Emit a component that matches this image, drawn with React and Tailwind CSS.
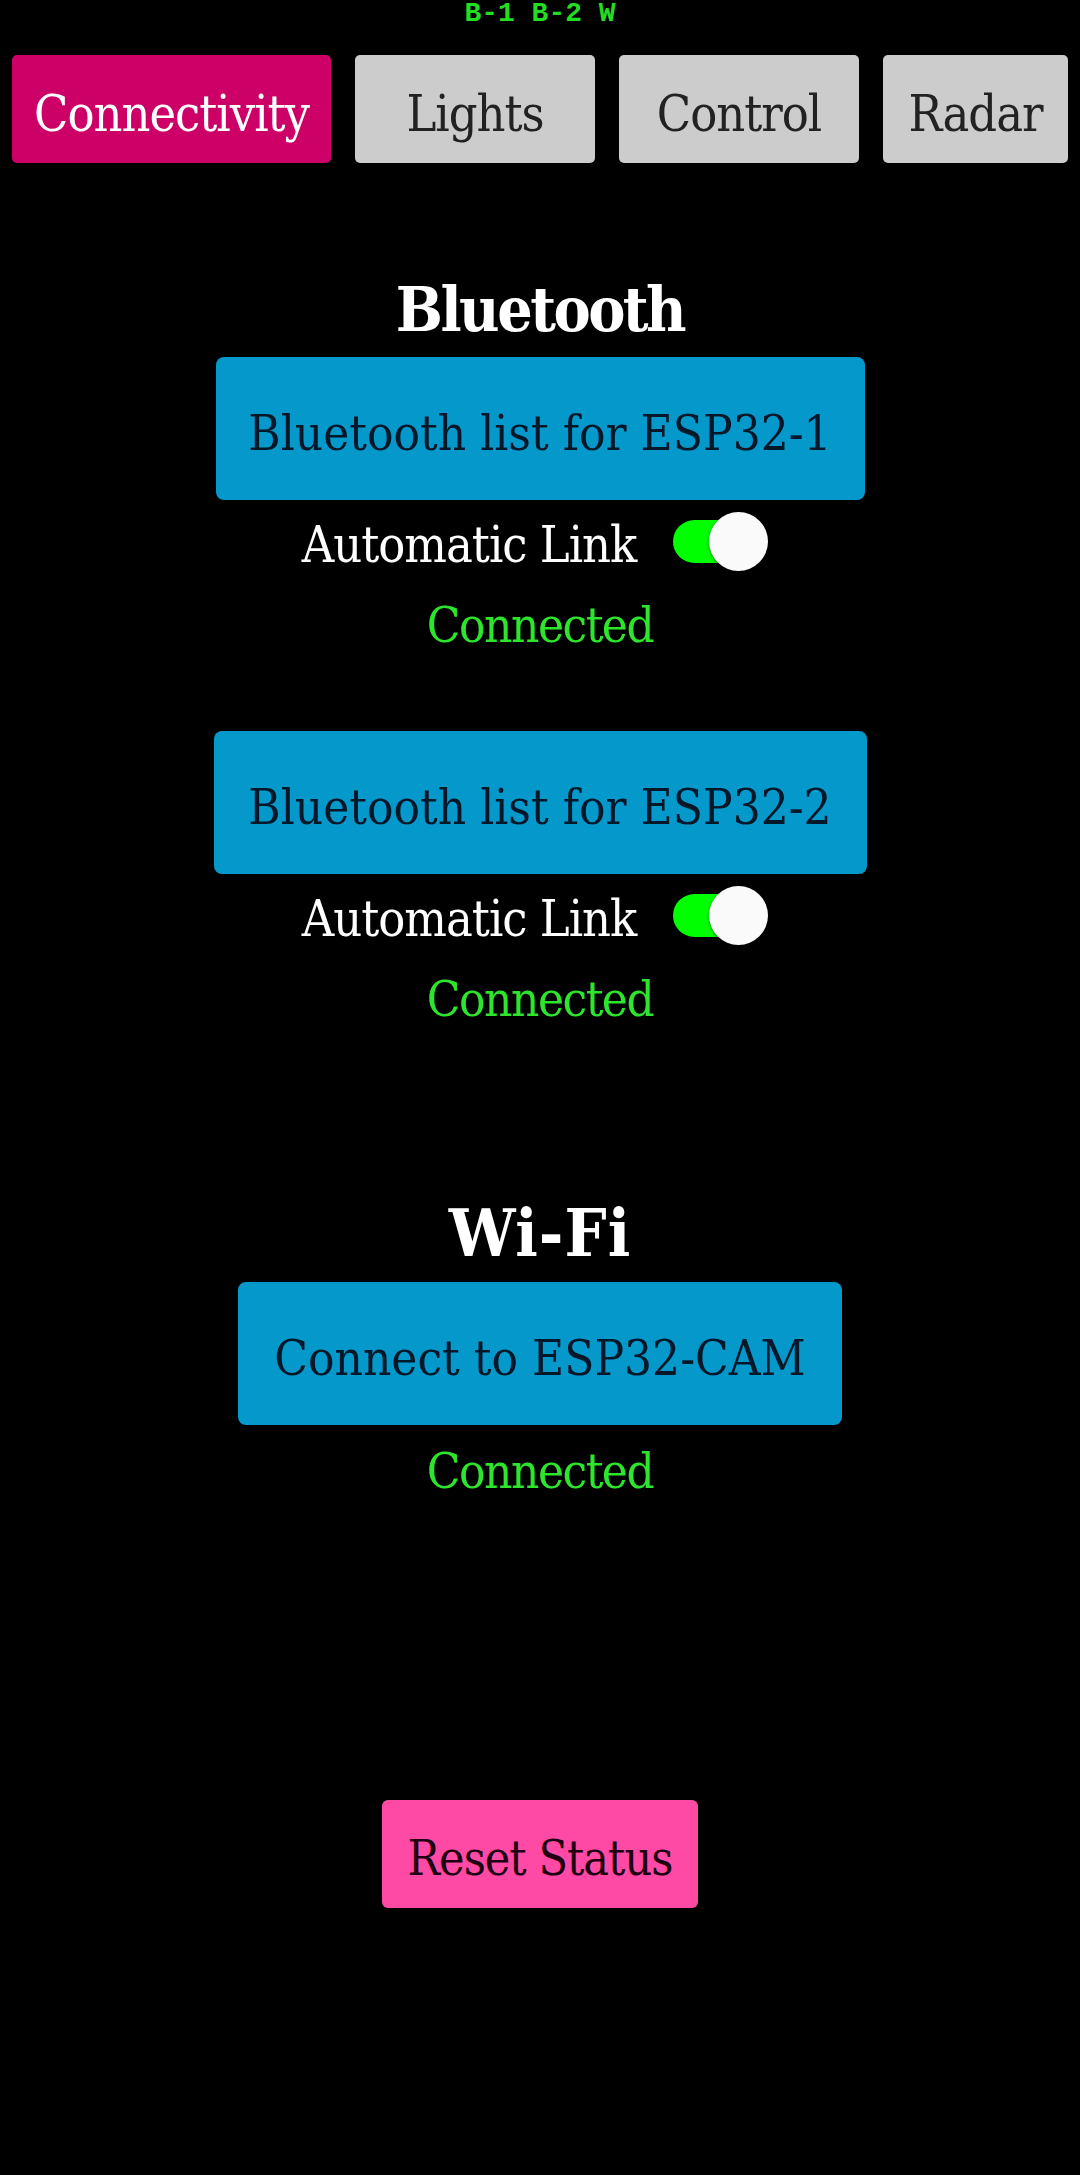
import React from "react";

const serif = "font-['DejaVu_Serif_Condensed','DejaVu_Serif',serif] font-stretch-condensed";

function Tab({ label, active, width }) {
  return (
    <div
      className={`${width} h-[108px] rounded-[5px] flex items-center justify-center pt-[10px] ${
        active ? "bg-[#cc0066] text-white" : "bg-[#cccccc] text-[#222222]"
      }`}
    >
      <span className={`${serif} text-[50px] leading-none tracking-[-1px]`}>{label}</span>
    </div>
  );
}

function BlueButton({ label, width, mt }) {
  return (
    <div
      className={`${width} ${mt} h-[143px] rounded-[8px] bg-[#0599cb] flex items-center justify-center pt-[9px]`}
    >
      <span className={`${serif} text-[49px] leading-none text-[#04182a] whitespace-nowrap`}>
        {label}
      </span>
    </div>
  );
}

function Toggle() {
  return (
    <div className="relative w-[95px] h-[59px]">
      <div className="absolute left-0 top-[8px] w-[82px] h-[43px] rounded-full bg-[#00ff00]" />
      <div className="absolute right-0 top-0 w-[59px] h-[59px] rounded-full bg-[#fafafa] shadow-[0_1px_3px_rgba(0,0,0,0.5)]" />
    </div>
  );
}

function AutoLink() {
  return (
    <div className="mt-[12px] h-[59px] flex items-center gap-[37px] -ml-[10px]">
      <span className={`${serif} text-[50px] leading-none tracking-[-1px] text-white pt-[7px] whitespace-nowrap`}>
        Automatic Link
      </span>
      <Toggle />
    </div>
  );
}

function Connected({ mt }) {
  return (
    <div className={`${mt} h-[49px] ${serif} text-[49px] leading-none tracking-[-1.5px] text-[#2ce52c]`}>
      Connected
    </div>
  );
}

export default function App() {
  return (
    <div className="w-[1080px] min-h-[2175px] bg-black flex flex-col items-center">
      <div className="h-[28px] font-['Liberation_Mono',monospace] font-bold text-[28px] leading-none text-[#22dd22] whitespace-pre">
        B-1 B-2 W
      </div>

      <div className="mt-[27px] w-full px-[12px] flex justify-between">
        <Tab label="Connectivity" active width="w-[319px]" />
        <Tab label="Lights" width="w-[240px]" />
        <Tab label="Control" width="w-[240px]" />
        <Tab label="Radar" width="w-[185px]" />
      </div>

      <h2 className={`mt-[116px] h-[62px] ${serif} font-bold text-[62px] leading-none tracking-[-2.5px] text-white`}>
        Bluetooth
      </h2>

      <BlueButton label="Bluetooth list for ESP32-1" width="w-[649px]" mt="mt-[16px]" />
      <AutoLink />
      <Connected mt="mt-[30px]" />

      <BlueButton label="Bluetooth list for ESP32-2" width="w-[653px]" mt="mt-[81px]" />
      <AutoLink />
      <Connected mt="mt-[30px]" />

      <h2 className={`mt-[176px] h-[66px] ${serif} font-bold text-[66px] leading-none tracking-[1px] text-white`}>
        Wi-Fi
      </h2>

      <BlueButton label="Connect to ESP32-CAM" width="w-[604px]" mt="mt-[16px]" />
      <Connected mt="mt-[22px]" />

      <div className="mt-[304px] w-[316px] h-[108px] rounded-[6px] bg-[#ff4aa5] flex items-center justify-center pt-[7px]">
        <span className={`${serif} text-[48px] leading-none tracking-[-1px] text-[#1e0012]`}>Reset Status</span>
      </div>
    </div>
  );
}
